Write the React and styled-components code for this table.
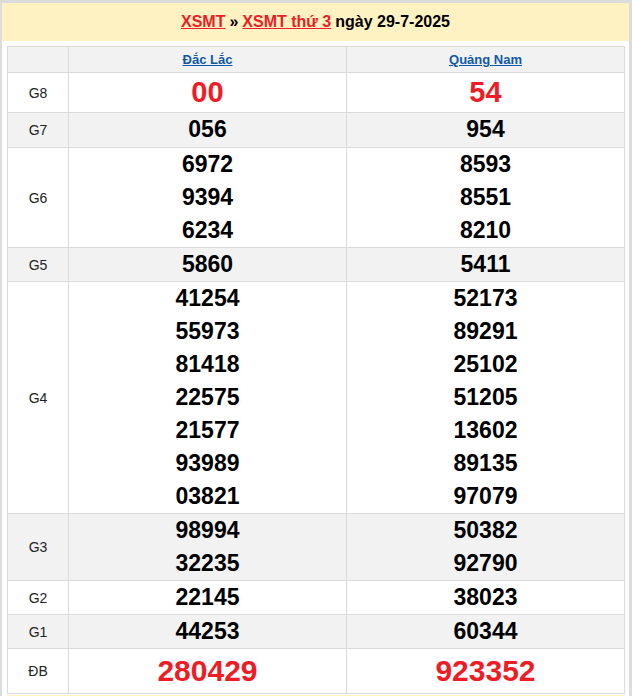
import React from "react";
import styled, { createGlobalStyle } from "styled-components";

const Global = createGlobalStyle`
  html, body { margin: 0; padding: 0; background: #fff; }
  body { font-family: "Liberation Sans", Arial, sans-serif; }
`;

const Frame = styled.div`
  box-sizing: border-box;
  width: 632px;
  height: 696px;
  overflow: hidden;
  border-top: 3px solid #dcdcdc;
  border-left: 2px solid #dcdcdc;
  border-right: 3px solid #dcdcdc;
  background: #fff;
`;

const Title = styled.h2`
  margin: 0;
  height: 38px;
  background: #fff2c2;
  display: flex;
  align-items: center;
  justify-content: center;
  font-size: 16px;
  font-weight: bold;
  color: #000;
  gap: 4px;
`;

const TitleLink = styled.a`
  color: #ee1c25;
  text-decoration: underline;
`;

const Body = styled.div`
  padding: 5px 4px 0 5px;
`;

const Footer = styled.div`
  margin-top: 1px;
  height: 20px;
  background: #fff2c2;
`;

const Table = styled.table`
  width: 618px;
  border-collapse: collapse;
  table-layout: fixed;
`;

const Row = styled.tr`
  background: ${(p) => (p.$alt ? "#f2f2f2" : "#fff")};
`;

const HeadCell = styled.th`
  border: 1px solid #dadada;
  height: 25px;
  padding: 0;
  font-size: 13px;
  font-weight: bold;
  text-align: center;
  vertical-align: middle;
`;

const Province = styled.a`
  color: #0f58a8;
  text-decoration: underline;
`;

const Label = styled.td`
  border: 1px solid #dadada;
  padding: 0;
  text-align: center;
  vertical-align: middle;
  font-size: 14px;
  color: #222;
`;

const Cell = styled.td`
  border: 1px solid #dadada;
  padding: 0 0 ${(p) => p.$extra || 0}px;
  text-align: center;
  vertical-align: middle;
`;

const Num = styled.div`
  font-weight: bold;
  font-size: ${(p) => (p.$size === "db" ? "30px" : p.$size === "g8" ? "29px" : "23px")};
  line-height: ${(p) => (p.$size === "db" ? "44px" : p.$size === "g8" ? "39px" : "33px")};
  color: ${(p) => (p.$red ? "#ee1c25" : "#000")};
`;

const rows = [
  { label: "G8", a: ["00"], b: ["54"], size: "g8", red: true },
  { label: "G7", a: ["056"], b: ["954"], extra: 1 },
  { label: "G6", a: ["6972", "9394", "6234"], b: ["8593", "8551", "8210"] },
  { label: "G5", a: ["5860"], b: ["5411"] },
  {
    label: "G4",
    a: ["41254", "55973", "81418", "22575", "21577", "93989", "03821"],
    b: ["52173", "89291", "25102", "51205", "13602", "89135", "97079"],
  },
  { label: "G3", a: ["98994", "32235"], b: ["50382", "92790"] },
  { label: "G2", a: ["22145"], b: ["38023"] },
  { label: "G1", a: ["44253"], b: ["60344"] },
  { label: "ĐB", a: ["280429"], b: ["923352"], size: "db", red: true },
];

export default function App() {
  return (
    <>
      <Global />
      <Frame>
        <Title>
          <TitleLink href="#">XSMT</TitleLink>
          <span>»</span>
          <TitleLink href="#">XSMT thứ 3</TitleLink>
          <span>ngày 29-7-2025</span>
        </Title>
        <Body>
          <Table>
            <colgroup>
              <col style={{ width: "61px" }} />
              <col />
              <col />
            </colgroup>
            <thead>
              <Row $alt>
                <HeadCell />
                <HeadCell>
                  <Province href="#">Đắc Lắc</Province>
                </HeadCell>
                <HeadCell>
                  <Province href="#">Quảng Nam</Province>
                </HeadCell>
              </Row>
            </thead>
            <tbody>
              {rows.map((r, i) => (
                <Row key={r.label} $alt={i % 2 === 1}>
                  <Label>{r.label}</Label>
                  <Cell $extra={r.extra}>
                    {r.a.map((n) => (
                      <Num key={n} $size={r.size} $red={r.red}>
                        {n}
                      </Num>
                    ))}
                  </Cell>
                  <Cell $extra={r.extra}>
                    {r.b.map((n) => (
                      <Num key={n} $size={r.size} $red={r.red}>
                        {n}
                      </Num>
                    ))}
                  </Cell>
                </Row>
              ))}
            </tbody>
          </Table>
          <Footer />
        </Body>
      </Frame>
    </>
  );
}
